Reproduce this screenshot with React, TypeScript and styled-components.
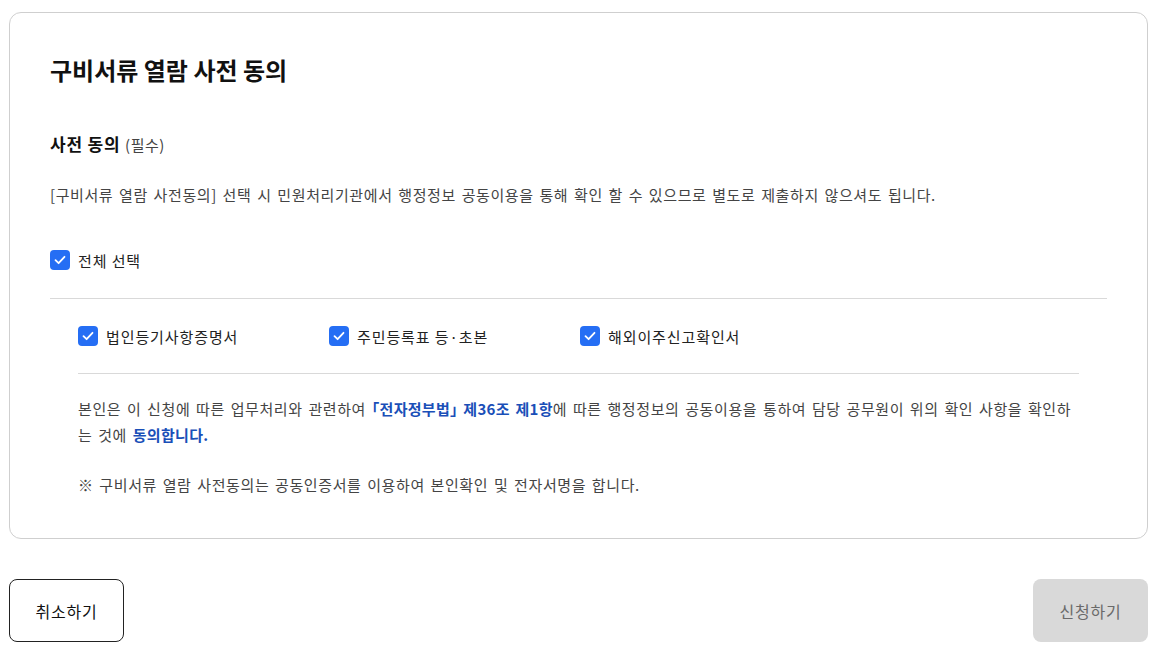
import { createGlobalStyle } from "styled-components";
import styled from "styled-components";

const GlobalStyle = createGlobalStyle`
  * { box-sizing: border-box; }
  body {
    margin: 0;
    background: #ffffff;
    font-family: "Noto Sans CJK KR", "Noto Sans", sans-serif;
    color: #1e1e1e;
  }
`;

const Page = styled.div`
  padding: 12px 7px 7px 9px;
`;

const Card = styled.section`
  border: 1px solid #cfcfcf;
  border-radius: 12px;
  padding: 39px 40px 40px 40px;
`;

const Title = styled.h2`
  margin: 0;
  font-size: 24px;
  line-height: 36px;
  font-weight: 700;
  color: #111;
`;

const SubTitle = styled.h3`
  margin: 43px 0 0;
  font-size: 17px;
  line-height: 26px;
  font-weight: 700;
  color: #111;
  letter-spacing: 0.8px;
`;

const Required = styled.span`
  font-size: 15px;
  font-weight: 400;
  color: #444;
  letter-spacing: 0.5px;
`;

const Text = styled.p`
  margin: 0;
  font-size: 15px;
  line-height: 26px;
  color: #444;
  letter-spacing: 0.6px;
  word-spacing: 1.8px;
`;

const Desc = styled(Text)`
  margin-top: 24px;
`;

const AllRow = styled.div`
  margin-top: 40px;
  padding-bottom: 26px;
  border-bottom: 1px solid #d9d9d9;
`;

const Check = styled.label`
  display: inline-flex;
  align-items: center;
  gap: 8px;
  height: 22px;
  font-size: 15px;
  color: #222;
  letter-spacing: 0.9px;
  cursor: pointer;
`;

const Box = styled.span`
  width: 20px;
  height: 20px;
  border-radius: 4px;
  background: #256ef4;
  display: flex;
  align-items: center;
  justify-content: center;
  flex: none;
`;

const Inner = styled.div`
  padding-left: 28px;
  padding-right: 28px;
`;

const Items = styled.div`
  display: grid;
  grid-template-columns: repeat(3, 251px);
  padding: 26px 0 26px;
  border-bottom: 1px solid #d9d9d9;
`;

const Agree = styled(Text)`
  margin-top: 22px;
`;

const Strong = styled.strong`
  color: #1a4fb8;
  font-weight: 700;
  letter-spacing: 0.3px;
  font-feature-settings: "halt";
`;

const Note = styled(Text)`
  margin-top: 24px;
`;

const Actions = styled.div`
  display: flex;
  justify-content: space-between;
  margin-top: 40px;
`;

const Button = styled.button<{ $primary?: boolean }>`
  width: 115px;
  height: 63px;
  border-radius: 8px;
  font-family: inherit;
  font-size: 16px;
  letter-spacing: 0.8px;
  border: ${(p) => (p.$primary ? "none" : "1px solid #222")};
  background: ${(p) => (p.$primary ? "#d9d9d9" : "#fff")};
  color: ${(p) => (p.$primary ? "#6a6a6a" : "#111")};
`;

function CheckIcon() {
  return (
    <svg width="14" height="14" viewBox="0 0 14 14" fill="none">
      <path d="M2.5 7.2 L5.6 10.2 L11.5 3.8" stroke="#fff" strokeWidth="1.8" strokeLinecap="round" strokeLinejoin="round" />
    </svg>
  );
}

function CheckItem({ label }: { label: string }) {
  return (
    <Check>
      <Box><CheckIcon /></Box>
      {label}
    </Check>
  );
}

const docs = ["법인등기사항증명서", "주민등록표 등·초본", "해외이주신고확인서"];

export default function App() {
  return (
    <Page>
      <GlobalStyle />
      <Card>
        <Title>구비서류 열람 사전 동의</Title>
        <SubTitle>
          사전 동의 <Required>(필수)</Required>
        </SubTitle>
        <Desc>
          [구비서류 열람 사전동의] 선택 시 민원처리기관에서 행정정보 공동이용을 통해 확인 할 수 있으므로 별도로 제출하지 않으셔도 됩니다.
        </Desc>
        <AllRow>
          <CheckItem label="전체 선택" />
        </AllRow>
        <Inner>
          <Items>
            {docs.map((d) => (
              <CheckItem key={d} label={d} />
            ))}
          </Items>
          <Agree>
            본인은 이 신청에 따른 업무처리와 관련하여 <Strong>「전자정부법」 제36조 제1항</Strong>에 따른 행정정보의 공동이용을 통하여 담당 공무원이 위의 확인 사항을 확인하는 것에 <Strong>동의합니다.</Strong>
          </Agree>
          <Note>※ 구비서류 열람 사전동의는 공동인증서를 이용하여 본인확인 및 전자서명을 합니다.</Note>
        </Inner>
      </Card>
      <Actions>
        <Button>취소하기</Button>
        <Button $primary>신청하기</Button>
      </Actions>
    </Page>
  );
}
